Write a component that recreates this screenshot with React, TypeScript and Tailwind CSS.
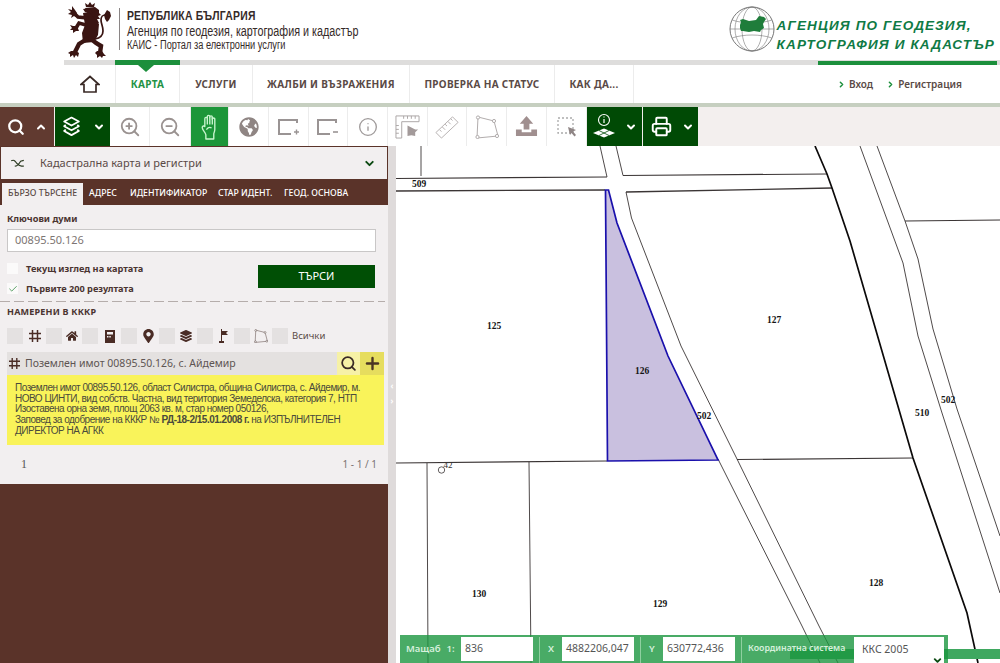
import React from "react";
import { Search, ChevronUp, ChevronDown, ChevronRight, ZoomIn, ZoomOut, Info, Printer, Plus, Check } from "lucide-react";
import { FaGlobeAmericas, FaHome, FaLayerGroup, FaMapMarkerAlt } from "react-icons/fa";

function Lion() {
  const c = "#3a1512";
  return (
    <svg viewBox="0 0 44 56" className="w-[44px] h-[56px] shrink-0" fill={c} stroke="none">
      <path d="M18 5l-1-4 3 2 2-3 2 3 3-2-1 4z" />
      <path d="M17 6l10-1 4 3 0 3 2 2-3 1 2 3-3 0 2 4-3 0 1 4-3-1z" />
      <path d="M25 12l-8-2-2-3 7-1z" />
      <path d="M15 11l6-1 10 12-1 11-4 7-11 1-1-10 3-8z" />
      <g fill="none" stroke={c} strokeLinecap="round">
        <path d="M19 16L10 15 6 11" strokeWidth="3.600" />
        <path d="M18 23L11 21 8 26" strokeWidth="3.600" />
        <path d="M19 37L11 42 7 50" strokeWidth="4.400" />
        <path d="M22 36L28 41 33 44 32 51" strokeWidth="4.400" />
        <path d="M27 37C32 36 35 33 35 29 35 24 33 22 33 18 33 15 35 13 37 13" strokeWidth="1.700" />
      </g>
      <path d="M7 8l-3-4 0 4-4-1 3 3-3 2 4 1-1 3 3-2 2 1 1-4z" />
      <path d="M9 24l-4 0-3-1 2 3-2 2 3 0 0 3 3-2 3 0z" />
      <path d="M3 49l5 0 3 2-1 4-2-2-2 3-1-3-3 2 0-3-2-1z" />
      <path d="M29 49l5 0 2 3 2 2-3 0-1 2-2-2-3 2 0-3-2-2z" />
      <path d="M36 13l3-5 3 2 1 4-2 4-2 2-2-3z" />
    </svg>
  );
}

function GlobeLogo() {
  return (
    <svg viewBox="0 0 46 46" className="w-[46px] h-[46px] shrink-0" fill="none" stroke="#777" strokeWidth="0.600">
      <circle cx="23" cy="23" r="22" strokeWidth="1" />
      <ellipse cx="23" cy="23" rx="10" ry="22" />
      <ellipse cx="23" cy="23" rx="17" ry="22" />
      <path d="M3 14c12 4 28 4 40 0M1 23h44M3 32c12-4 28-4 40 0" />
      <path d="M11 14l3-1 6 2 7-1 3-4 5 1 2 2-2 3-1 2 1 4-3 2-1 2-6-1-5 1-6-1-2 0-1-3 0-3 1-3z" fill="#1f7d3b" stroke="none" />
    </svg>
  );
}

function HomeIcon() {
  return (
    <svg viewBox="0 0 20 18" className="w-[20px] h-[18px]" fill="none" stroke="#3a2a26" strokeWidth="1.700">
      <path d="M1 9.500L10 1.500l9 8h-3V17H4V9.500z" />
    </svg>
  );
}

function HandIcon() {
  return (
    <svg viewBox="0 0 16 25" className="w-[17px] h-[26px]" fill="none" stroke="#c9f5cf" strokeWidth="1.300" strokeLinejoin="round">
      <path d="M3.500 12V4.500a1.200 1.200 0 0 1 2.400 0V2.500a1.200 1.200 0 0 1 2.400 0V3a1.200 1.200 0 0 1 2.400 0v2a1.200 1.200 0 0 1 2.400 0V15c0 2-1 3-1 4v5H4.500v-4c0-2-3.500-4.500-3.500-7 0-2 2-1.500 2.500-1z" />
      <path d="M5.900 4.500V10M8.300 3v7M10.700 3v7M5 15c1.500-2 3.500-2.500 5-1.500" />
    </svg>
  );
}

function HashIcon({ className }: { className?: string }) {
  return (
    <svg viewBox="0 0 12 12" className={className} fill="none" stroke="#4a2c25" strokeWidth="1.500">
      <path d="M3.500 0v12M8.500 0v12M0 3.500h12M0 8.500h12" />
    </svg>
  );
}

function CalcIcon() {
  return (
    <svg viewBox="0 0 10 13" className="w-[10px] h-[13px]" fill="#4a2c25">
      <path d="M0 0h10v13H0zM2 2v2.500h6V2zM2 6v1.500h1.500V6zM4.300 6v1.500h1.500V6z" fillRule="evenodd" />
    </svg>
  );
}

function FlagIcon() {
  return (
    <svg viewBox="0 0 9 14" className="w-[9px] h-[14px]" fill="#4a2c25">
      <path d="M2 0h1v2l6 0-2 2 2 2H3v6h2v2H0v-2h2z" />
    </svg>
  );
}

function RectPlus({ sign }: { sign: "+" | "-" }) {
  return (
    <svg viewBox="0 0 24 20" className="w-[24px] h-[20px]" fill="none" stroke="#9a9494" strokeWidth="2">
      <path d="M20 6V3H2v14h12" />
      {sign === "+" ? <path d="M17 15h5M19.500 12.500v5" strokeWidth="1.400" /> : <path d="M17 15h5" strokeWidth="1.600" />}
    </svg>
  );
}

function Layers({ className, color }: { className?: string; color: string }) {
  return (
    <svg viewBox="0 0 20 20" className={className} fill="none" stroke={color} strokeWidth="1.700" strokeLinejoin="round">
      <path d="M10 1.500l7 3.800-7 3.800-7-3.800z" />
      <path d="M4.500 8.500L3 9.800l7 3.800 7-3.800-1.500-1.300" />
      <path d="M4.500 13L3 14.300l7 3.900 7-3.900L15.500 13" />
    </svg>
  );
}

function RulerCombo() {
  return (
    <svg viewBox="0 0 26 26" className="w-[25px] h-[25px]" fill="none" stroke="#aba5a5" strokeWidth="1">
      <path d="M1 2h24v6H7v17H1z" />
      <path d="M9 2v3M13 2v3M17 2v3M21 2v3M1 12h3M1 16h3M1 20h3" />
      <path d="M13 12l8 4 3 0-3 3 0 4-4-1-4 1z" fill="#a39a9a" stroke="none" />
    </svg>
  );
}

function RulerIcon() {
  return (
    <svg viewBox="0 0 26 26" className="w-[24px] h-[24px]" fill="none" stroke="#b2adad" strokeWidth="1">
      <path d="M1 19L19 2l6 6L7 25z" />
      <path d="M5 16l2 2M8 13l3 3M11 10l2 2M14 7l3 3M17 4l2 2" />
    </svg>
  );
}

function PolyIcon({ className, color = "#b2adad" }: { className?: string; color?: string }) {
  return (
    <svg viewBox="0 0 24 24" className={className} fill="none" stroke={color} strokeWidth="1">
      <path d="M3 2l16 4 4 15L2 23z" />
      <circle cx="3" cy="2.500" r="1.600" fill="#fff" />
      <circle cx="19" cy="6" r="1.600" fill="#fff" />
      <circle cx="22" cy="21" r="1.600" fill="#fff" />
      <circle cx="2.500" cy="22" r="1.600" fill="#fff" />
    </svg>
  );
}

function UploadIcon() {
  return (
    <svg viewBox="0 0 24 24" className="w-[23px] h-[23px]" fill="#a08f8f">
      <path d="M12 1l7 8h-4v6H9V9H5z" />
      <path d="M1 15h6v3h10v-3h6v7H1z" />
    </svg>
  );
}

function SelectIcon() {
  return (
    <svg viewBox="0 0 20 20" className="w-[20px] h-[20px]">
      <rect x="1" y="1" width="15" height="15" fill="none" stroke="#aaa" strokeWidth="1.300" strokeDasharray="2 2" />
      <path d="M11 10l8 3-3 1.500 3 3.500-1.500 1.500-3-3.500L13 18z" fill="#8f8585" />
    </svg>
  );
}

function InfoLayers() {
  return (
    <svg viewBox="0 0 24 28" className="w-[24px] h-[28px]" fill="none" stroke="#fff">
      <circle cx="12" cy="7" r="5.500" strokeWidth="1.100" />
      <path d="M12 6v4M12 3.600v1" strokeWidth="1.200" />
      <path d="M12 15.500l11 4.500-11 4.500L1 20z" fill="#fff" stroke="none" />
      <path d="M7 17.500l10 5M17 17.500l-10 5" stroke="#004a05" strokeWidth="0.800" />
    </svg>
  );
}

function Tool({ w, active, children }: { w: string; active?: boolean; children: React.ReactNode }) {
  return (
    <div className={`${w} h-full flex items-center justify-center border-r border-[#ececec] ${active ? "bg-[#1c9639]" : "bg-white"}`}>
      {children}
    </div>
  );
}

function Square() {
  return <span className="w-[16px] h-[16px] bg-[#e4e1e1] shrink-0" />;
}

function MapDrawing() {
  const thin = "#3b3535";
  const labels: [string, number, number][] = [
    ["509", 419, 187],
    ["125", 494, 329],
    ["126", 642, 374],
    ["127", 774, 323],
    ["502", 704, 419],
    ["510", 922, 416],
    ["502", 948, 403],
    ["130", 479, 597],
    ["129", 660, 607],
    ["128", 876, 586],
  ];
  return (
    <svg viewBox="396 146 604 517" className="w-full h-full block" fill="none">
      <g stroke={thin} strokeWidth="0.900">
        <path d="M421 146V176" />
        <path d="M396 178.500L607 177" strokeWidth="1.200" />
        <path d="M623 175.500L827 174" strokeWidth="1.200" />
        <path d="M396 191L605 190" strokeWidth="1.300" />
        <path d="M626 192L832 188" strokeWidth="1.300" />
        <path d="M600 146L607 177" />
        <path d="M616 146L623 175.500" />
        <path d="M626 192L631.500 218L681 346L737 459L819 626L838 663" />
        <path d="M718 459L802 626L820 663" />
        <path d="M860 146L903 263L918 336L942 413L1000 593" />
        <path d="M877 146L905 221L918 259L933 329L957 409L1000 536" />
        <path d="M905 221L1000 220" strokeWidth="1.200" />
        <path d="M396 463L607 461" strokeWidth="1.200" />
        <path d="M737 459.500L913 458" strokeWidth="1.200" />
        <path d="M427 463L428 663" />
        <path d="M529 462L531 663" />
      </g>
      <path d="M815 146L827 174L832 188L850 241L913 458L967 613L978 663" stroke="#0c0a0a" strokeWidth="1.700" />
      <path d="M605.500 190H608.500L617 223L668 356L718 460L607.500 461Z" fill="#c9c0df" stroke="#1a10ac" strokeWidth="1.700" />
      <circle cx="441.500" cy="470" r="3.200" stroke={thin} strokeWidth="0.800" />
      {labels.map(([t, x, y], i) => (
        <text key={i} x={x} y={y} textAnchor="middle" fill="#141414" stroke="none" className="font-['Liberation_Serif',serif] font-bold text-[9.500px]">
          {t}
        </text>
      ))}
      <text x="448" y="468" textAnchor="middle" fill="#333" stroke="none" className="font-['Liberation_Serif',serif] text-[9px]">42</text>
    </svg>
  );
}

export default function App() {
  return (
    <div className="w-full h-[663px] flex flex-col overflow-hidden bg-white font-['Noto_Sans',sans-serif] text-[#4a3a36]">
      {/* header */}
      <header className="h-[60px] flex items-start shrink-0">
        <div className="pl-[68px] pt-[2px] flex">
          <Lion />
          <div className="w-px h-[42px] bg-[#8a8585] ml-[7px] mt-[6px]" />
          <div className="pl-[9px] pt-[6px] font-['Liberation_Sans',sans-serif] text-[#352a28] origin-left scale-x-[0.77] whitespace-nowrap">
            <div className="text-[13.500px] leading-[16px] font-bold tracking-[0.300px]">РЕПУБЛИКА БЪЛГАРИЯ</div>
            <div className="text-[14px] leading-[14px]">Агенция по геодезия, картография и кадастър</div>
            <div className="text-[12px] leading-[14px]">КАИС - Портал за електронни услуги</div>
          </div>
        </div>
        <div className="ml-auto pr-[5px] pt-[6px] flex items-start">
          <GlobeLogo />
          <div className="pl-[2px] pt-[10px] font-['Liberation_Sans',sans-serif] font-bold italic text-[#0f7a45] text-[13.500px] leading-[19px] tracking-[1.150px] whitespace-nowrap">
            <div>АГЕНЦИЯ ПО ГЕОДЕЗИЯ,</div>
            <div>КАРТОГРАФИЯ И КАДАСТЪР</div>
          </div>
        </div>
      </header>

      {/* nav */}
      <nav className="shrink-0 pl-[64px]">
        <div className="relative h-[5px] bg-[#dedddc]">
          <div className="absolute left-[51px] top-0 w-[65px] h-[5px] bg-[#1c8f3c]" />
          <div className="absolute left-[74px] top-[5px] w-0 h-0 border-x-[8px] border-x-transparent border-t-[7px] border-t-[#1c8f3c]" />
          <div className="absolute left-[754px] top-[1px] w-[179px] h-[4px] bg-[#1c8f3c]" />
        </div>
        <div className="h-[38px] flex items-center text-[10px] font-bold tracking-[0.300px] text-[#5a4a46]">
          <div className="w-[51px] h-full flex items-center justify-center"><HomeIcon /></div>
          <div className="w-[65px] h-full flex items-center justify-center border-x border-[#ececec] text-[#1f9345]">КАРТА</div>
          <div className="w-[73px] h-full flex items-center justify-center border-r border-[#ececec]">УСЛУГИ</div>
          <div className="w-[157px] h-full flex items-center justify-center border-r border-[#ececec]">ЖАЛБИ И ВЪЗРАЖЕНИЯ</div>
          <div className="w-[145px] h-full flex items-center justify-center border-r border-[#ececec]">ПРОВЕРКА НА СТАТУС</div>
          <div className="w-[79px] h-full flex items-center justify-center border-r border-[#ececec]">КАК ДА...</div>
          <div className="ml-auto pr-[38px] flex gap-[13px] text-[10px] tracking-normal font-semibold">
            <span className="flex items-center gap-[3px]"><ChevronRight className="w-[9px] h-[9px] text-[#1c8f3c]" strokeWidth={4} />Вход</span>
            <span className="flex items-center gap-[3px]"><ChevronRight className="w-[9px] h-[9px] text-[#1c8f3c]" strokeWidth={4} />Регистрация</span>
          </div>
        </div>
      </nav>
      <div className="h-[4px] bg-[#c6cfc0] shrink-0" />

      {/* toolbar */}
      <div className="h-[39px] flex bg-[#f3efee] shrink-0">
        <div className="w-[54px] h-full bg-[#613a30] flex items-center justify-center gap-[10px] text-white">
          <Search className="w-[18px] h-[18px]" strokeWidth={3} />
          <ChevronUp className="w-[12px] h-[12px]" strokeWidth={4} />
        </div>
        <div className="w-[55px] h-full ml-px bg-[#004a05] flex items-center justify-center gap-[11px] text-white">
          <Layers className="w-[21px] h-[21px]" color="#fff" />
          <ChevronDown className="w-[12px] h-[12px]" strokeWidth={4} />
        </div>
        <Tool w="w-[40px]"><ZoomIn className="w-[22px] h-[22px] text-[#9a9290]" strokeWidth={2} /></Tool>
        <Tool w="w-[41px]"><ZoomOut className="w-[22px] h-[22px] text-[#9a9290]" strokeWidth={2} /></Tool>
        <Tool w="w-[38px]" active><HandIcon /></Tool>
        <Tool w="w-[40px]"><FaGlobeAmericas className="w-[20px] h-[20px] text-[#8f8583]" /></Tool>
        <Tool w="w-[40px]"><RectPlus sign="+" /></Tool>
        <Tool w="w-[39px]"><RectPlus sign="-" /></Tool>
        <Tool w="w-[40px]"><Info className="w-[20px] h-[20px] text-[#9f9a9a]" strokeWidth={1.600} /></Tool>
        <Tool w="w-[40px]"><RulerCombo /></Tool>
        <Tool w="w-[39px]"><RulerIcon /></Tool>
        <Tool w="w-[40px]"><PolyIcon className="w-[24px] h-[24px]" /></Tool>
        <Tool w="w-[40px]"><UploadIcon /></Tool>
        <Tool w="w-[40px]"><SelectIcon /></Tool>
        <div className="w-[55px] h-full bg-[#004a05] flex items-center justify-center gap-[9px] text-white">
          <InfoLayers />
          <ChevronDown className="w-[12px] h-[12px]" strokeWidth={4} />
        </div>
        <div className="w-[55px] h-full ml-px bg-[#004a05] flex items-center justify-center pl-[4px] gap-[10px] text-white">
          <Printer className="w-[21px] h-[21px]" strokeWidth={2.200} />
          <ChevronDown className="w-[12px] h-[12px]" strokeWidth={4} />
        </div>
      </div>

      {/* body */}
      <div className="flex-1 min-h-0 flex">
        <aside className="w-[388px] shrink-0 bg-[#5a3329] flex flex-col">
          <div className="h-[32px] mx-px mt-px bg-[#f2eff0] flex items-center pl-[9px] pr-[11px] text-[11px] text-[#5a4a46]">
            <svg viewBox="0 0 16 10" className="w-[15px] h-[9px] shrink-0" fill="none" stroke="#2b3a20" strokeWidth="1.300">
              <path d="M1 2c3-1.500 4 0 6 2.500S11 8 15 8M5 8c3 0 5-3 6.500-5.500L15 1.500" />
            </svg>
            <span className="ml-[15px]">Кадастрална карта и регистри</span>
            <ChevronDown className="ml-auto w-[13px] h-[13px] text-[#0c4a12]" strokeWidth={3.500} />
          </div>
          <div className="h-[26px] pt-[4px] flex items-stretch pl-[2px] text-[8.700px] text-white font-medium whitespace-nowrap">
            <div className="w-[81px] bg-[#f2eff0] text-[#5a4a46] flex items-center justify-center">БЪРЗО ТЪРСЕНЕ</div>
            <div className="flex items-center pl-[6px] w-[47px]">АДРЕС</div>
            <div className="flex items-center w-[88px]">ИДЕНТИФИКАТОР</div>
            <div className="flex items-center w-[66px]">СТАР ИДЕНТ.</div>
            <div className="flex items-center">ГЕОД. ОСНОВА</div>
          </div>
          <div className="h-[279px] bg-[#f2eff0] px-[7px] pt-[7px] flex flex-col">
            <label className="text-[9.200px] leading-[13px] font-bold text-[#4a3430]">Ключови думи</label>
            <div className="mt-[4px] h-[23px] w-[369px] bg-white border border-[#c9c7c7] pl-[7px] flex items-center text-[11px] text-[#7d7573]">00895.50.126</div>
            <div className="mt-[10px] flex justify-between">
              <div className="flex flex-col gap-[9px] pt-[1px]">
                <div className="flex items-center gap-[8px] text-[9.200px] leading-[11px] font-bold text-[#4a3430]">
                  <span className="w-[11px] h-[11px] bg-[#fbfafa]" />Текущ изглед на картата
                </div>
                <div className="flex items-center gap-[8px] text-[9.200px] leading-[11px] font-bold text-[#4a3430]">
                  <span className="w-[11px] h-[11px] bg-[#fbfafa] flex items-center justify-center"><Check className="w-[10px] h-[10px] text-[#3c8f4a]" strokeWidth={2} /></span>Първите 200 резултата
                </div>
              </div>
              <div className="w-[117px] h-[23px] mt-[3px] mr-[6px] bg-[#004f05] text-white text-[11px] flex items-center justify-center">ТЪРСИ</div>
            </div>
            <div className="mt-[7px] -mx-[7px] w-[385px] h-px shrink-0 bg-[repeating-linear-gradient(90deg,#b5adab_0_10px,transparent_10px_14px)]" />
            <div className="mt-[3px] text-[9px] leading-[13px] font-bold text-[#4a3430] tracking-[0.200px]">НАМЕРЕНИ В КККР</div>
            <div className="mt-[10px] h-[16px] flex items-center text-[#4a2c25]">
              <Square />
              <span className="w-[23px] flex justify-center"><HashIcon className="w-[12px] h-[12px]" /></span>
              <Square />
              <span className="w-[20px] flex justify-center"><FaHome className="w-[12px] h-[12px]" /></span>
              <Square />
              <span className="w-[23px] flex justify-center"><CalcIcon /></span>
              <Square />
              <span className="w-[22px] flex justify-center"><FaMapMarkerAlt className="w-[11px] h-[14px]" /></span>
              <Square />
              <span className="w-[22px] flex justify-center"><FaLayerGroup className="w-[12px] h-[12px]" /></span>
              <Square />
              <span className="w-[21px] flex justify-center"><FlagIcon /></span>
              <Square />
              <span className="w-[22px] flex justify-center"><PolyIcon className="w-[14px] h-[14px]" color="#6a5a56" /></span>
              <Square />
              <span className="ml-[4px] text-[9.500px] text-[#5a4a46]">Всички</span>
            </div>
            <div className="mt-[8px] w-[377px] h-[23px] flex items-center bg-[#e4e1e0]">
              <HashIcon className="ml-[2px] w-[11px] h-[11px]" />
              <span className="ml-[5px] text-[10.500px] text-[#5e5553]">Поземлен имот 00895.50.126, с. Айдемир</span>
              <span className="ml-auto w-[23px] h-full bg-[#f6f1a6] flex items-center justify-center"><Search className="w-[17px] h-[17px] text-[#3a2a26]" strokeWidth={2.500} /></span>
              <span className="w-[24px] h-full bg-[#e6dd5e] flex items-center justify-center"><Plus className="w-[19px] h-[19px] text-[#4a3424]" strokeWidth={3} /></span>
            </div>
            <div className="w-[377px] h-[70px] bg-[#f9f35a] px-[8px] pt-[8px] font-['Liberation_Sans',sans-serif] text-[10px] tracking-[-0.500px] leading-[10.700px] text-[#4a4a3c]">
              Поземлен имот 00895.50.126, област Силистра, община Силистра, с. Айдемир, м. НОВО ЦИНТИ, вид собств. Частна, вид територия Земеделска, категория 7, НТП Изоставена орна земя, площ 2063 кв. м, стар номер 050126,<br />
              Заповед за одобрение на КККР № <b>РД-18-2/15.01.2008 г.</b> на ИЗПЪЛНИТЕЛЕН ДИРЕКТОР НА АГКК
            </div>
            <div className="mt-[10px] w-[356px] ml-[14px] flex items-center justify-between text-[#7a7270]">
              <span className="font-['Liberation_Serif',serif] text-[12px] text-[#555]">1</span>
              <span className="text-[10px]">1 - 1 / 1</span>
            </div>
          </div>
        </aside>
        <div className="w-[8px] shrink-0 bg-[#dfdbdb] flex flex-col items-center pt-[236px] gap-[7px] text-white text-[8px] leading-[8px] font-bold">
          <span>‹</span>
          <span>›</span>
        </div>
        <main className="relative flex-1 min-w-0 bg-white">
          <MapDrawing />
          <div className="absolute left-[394px] right-0 top-[503px] h-[10px] bg-[#3fa860]" />
          <div className="absolute left-[604px] right-0 top-[511px] h-[5px] bg-[#a6d8b3]" />
          <div className="absolute left-[4px] bottom-0 w-[548px] h-[28px] bg-[#1c9640]/80 flex items-start pt-[2px] pl-[6px] text-[9.500px] font-semibold text-[#d6f0dc]">
            <span className="w-[55px] h-[24px] flex items-center gap-[6px]">Мащаб <span>1:</span></span>
            <div className="w-[72px] h-[24px] bg-white text-[10.500px] font-normal text-[#555] pl-[4px] flex items-center">836</div>
            <span className="w-px h-[26px] ml-[6px] bg-[#8fd0a0]" />
            <span className="w-[22px] h-[24px] flex items-center pl-[8px]">X</span>
            <div className="w-[72px] h-[24px] bg-white text-[10.500px] font-normal text-[#555] pl-[4px] flex items-center whitespace-nowrap">4882206,047</div>
            <span className="w-px h-[26px] ml-[6px] bg-[#8fd0a0]" />
            <span className="w-[22px] h-[24px] flex items-center pl-[8px]">Y</span>
            <div className="w-[72px] h-[24px] bg-white text-[10.500px] font-normal text-[#555] pl-[4px] flex items-center">630772,436</div>
            <span className="w-px h-[26px] ml-[6px] bg-[#8fd0a0]" />
            <span className="w-[112px] h-[24px] flex items-center pl-[6px] whitespace-nowrap text-[8.800px]">Координатна система</span>
            <div className="relative w-[90px] h-[26px] bg-white text-[10.500px] font-normal text-[#555] pl-[8px] flex items-center">
              ККС 2005
              <ChevronDown className="absolute right-[1px] -bottom-[3px] w-[11px] h-[11px] text-[#0c4a12]" strokeWidth={4} />
            </div>
          </div>
        </main>
      </div>
    </div>
  );
}
